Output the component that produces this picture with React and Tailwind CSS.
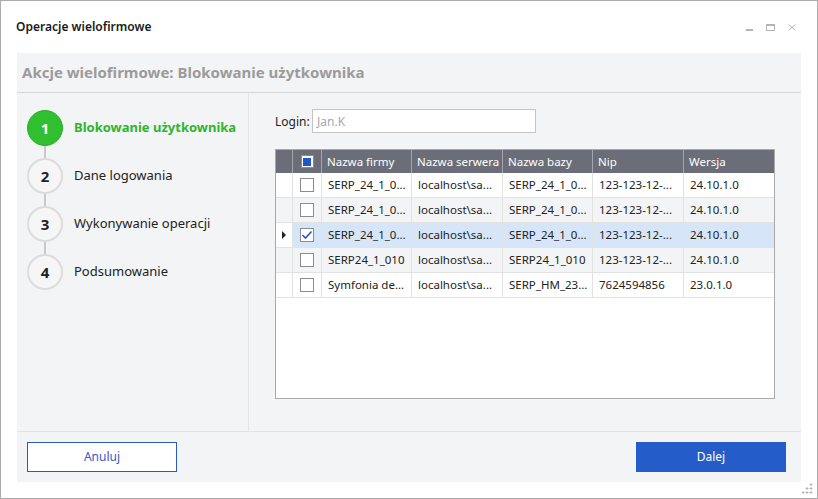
import React from "react";

const steps = [
  { n: 1, label: "Blokowanie użytkownika", active: true },
  { n: 2, label: "Dane logowania" },
  { n: 3, label: "Wykonywanie operacji" },
  { n: 4, label: "Podsumowanie" },
];

const columns = ["Nazwa firmy", "Nazwa serwera", "Nazwa bazy", "Nip", "Wersja"];

const rows = [
  { cells: ["SERP_24_1_0...", "localhost\\sa...", "SERP_24_1_0...", "123-123-12-...", "24.10.1.0"], bg: "bg-white" },
  { cells: ["SERP_24_1_0...", "localhost\\sa...", "SERP_24_1_0...", "123-123-12-...", "24.10.1.0"], bg: "bg-[#f3f4f6]" },
  { cells: ["SERP_24_1_0...", "localhost\\sa...", "SERP_24_1_0...", "123-123-12-...", "24.10.1.0"], bg: "bg-[#d6e6f8]", selected: true },
  { cells: ["SERP24_1_010", "localhost\\sa...", "SERP24_1_010", "123-123-12-...", "24.10.1.0"], bg: "bg-[#f3f4f6]" },
  { cells: ["Symfonia de...", "localhost\\sa...", "SERP_HM_23...", "7624594856", "23.0.1.0"], bg: "bg-white" },
];

const colW = ["w-[90px]", "w-[91px]", "w-[90px]", "w-[91px]", "flex-1"];

const Checkbox = ({ checked }) => (
  <div className="w-[14px] h-[14px] border border-[#8c8c8c] bg-white flex items-center justify-center">
    {checked && (
      <svg width="12" height="10" viewBox="0 0 12 10">
        <path d="M1.5 5 L4.5 8 L10.5 1.5" fill="none" stroke="#2457c7" strokeWidth="1.6" />
      </svg>
    )}
  </div>
);

export default function App() {
  return (
    <div className="w-[818px] h-[499px] border border-[#ababab] bg-white flex flex-col relative font-['Noto_Sans',sans-serif] text-[#222]">
      {/* Title bar */}
      <div className="h-[52px] flex items-center justify-between pl-[15px] pr-[21px]">
        <span className="text-[12px] font-semibold text-[#1a1a1a] -mt-[1px]">Operacje wielofirmowe</span>
        <div className="flex items-center gap-[13px]">
          <div className="w-[7px] h-[2px] bg-[#b4b4b4] mt-[5px]" />
          <div className="w-[9px] h-[7px] border border-[#b4b4b4] border-t-2" />
          <svg width="8" height="7" viewBox="0 0 8 7">
            <path d="M0.5 0.5 L7.5 6.5 M7.5 0.5 L0.5 6.5" stroke="#b4b4b4" strokeWidth="1" />
          </svg>
        </div>
      </div>

      {/* Panel */}
      <div className="flex-1 mx-[16px] mb-[16px] bg-[#f3f4f6] flex flex-col">
        <div className="h-[40px] border-b border-[#d6d6d6] flex items-center pl-[5px]">
          <span className="text-[15px] font-bold text-[#9b9b9b]">Akcje wielofirmowe: Blokowanie użytkownika</span>
        </div>

        <div className="flex-1 flex border-b border-[#e2e3e5]">
          {/* Steps */}
          <div className="w-[232px] border-r border-[#e4e5e7] pt-[17px] pl-[10px]">
            {steps.map((s, i) => (
              <div key={s.n}>
                {i > 0 && <div className="w-[2px] h-[12px] bg-[#c9c9c9] ml-[17px]" />}
                <div className="flex items-center">
                  <div
                    className={
                      s.active
                        ? "w-[36px] h-[36px] rounded-full bg-[#2fbf2f] border border-[#2aad2a] flex items-center justify-center text-white text-[15px] font-bold"
                        : "w-[36px] h-[36px] rounded-full bg-[#f6f6f6] border-2 border-[#dcdcdc] flex items-center justify-center text-[#222] text-[15px] font-bold"
                    }
                  >
                    {s.n}
                  </div>
                  <span
                    className={
                      s.active
                        ? "ml-[11px] text-[13px] font-bold text-[#2db52d] -mt-[1px]"
                        : "ml-[11px] text-[13px] text-[#222] -mt-[1px]"
                    }
                  >
                    {s.label}
                  </span>
                </div>
              </div>
            ))}
          </div>

          {/* Right side */}
          <div className="flex-1 pt-[16px] pl-[26px]">
            <div className="flex items-center">
              <span className="text-[12px] text-[#222] w-[37px] mt-[1px]">Login:</span>
              <div className="w-[224px] h-[24px] border border-[#c4c4c4] bg-white flex items-center pl-[4px]">
                <span className="text-[12px] text-[#a8a8a8] mt-[1px]">Jan.K</span>
              </div>
            </div>

            <div className="mt-[16px] w-[500px] h-[250px] border border-[#a9a9a9] bg-white flex flex-col text-[11.5px]">
              <div className="h-[23px] bg-[#6b6e78] flex text-white">
                <div className="w-[17px] border-r border-[#a4a6ad]" />
                <div className="w-[29px] border-r border-[#a4a6ad] flex items-center justify-center">
                  <div className="w-[13px] h-[13px] bg-white border border-[#8c8c8c] flex items-center justify-center">
                    <div className="w-[8px] h-[8px] bg-[#1f57c8]" />
                  </div>
                </div>
                {columns.map((c, i) => (
                  <div key={c} className={`${colW[i]} ${i < 4 ? "border-r border-[#a4a6ad]" : ""} flex items-center pl-[5px] whitespace-nowrap overflow-hidden`}>
                    {c}
                  </div>
                ))}
              </div>
              {rows.map((r, ri) => (
                <div key={ri} className={`h-[25px] flex border-b border-[#e2e2e2] ${r.bg}`}>
                  <div className={`w-[17px] border-r border-[#e2e2e2] flex items-center justify-center ${r.selected ? "bg-white" : ""}`}>
                    {r.selected && (
                      <svg width="4" height="8" viewBox="0 0 4 8">
                        <path d="M0 0 L4 4 L0 8 Z" fill="#222" />
                      </svg>
                    )}
                  </div>
                  <div className="w-[29px] border-r border-[#e2e2e2] flex items-center justify-center">
                    <Checkbox checked={r.selected} />
                  </div>
                  {r.cells.map((c, i) => (
                    <div key={i} className={`${colW[i]} ${i < 4 ? "border-r border-[#e2e2e2]" : ""} flex items-center pl-[6px] text-[#222] whitespace-nowrap overflow-hidden`}>
                      {c}
                    </div>
                  ))}
                </div>
              ))}
            </div>
          </div>
        </div>

        {/* Footer */}
        <div className="h-[50px] flex items-center justify-between pl-[10px] pr-[15px]">
          <button className="w-[150px] h-[30px] border border-[#2a5cc8] bg-white text-[12px] text-[#3a55c8]">Anuluj</button>
          <button className="w-[150px] h-[30px] bg-[#245dc9] text-[12px] text-white">Dalej</button>
        </div>
      </div>

      {/* resize grip */}
      <svg className="absolute right-[3px] bottom-[3px]" width="12" height="12" viewBox="0 0 12 12">
        {[[9, 1], [9, 5], [5, 5], [9, 9], [5, 9], [1, 9]].map(([x, y], i) => (
          <path key={i} d={`M${x} ${y - 1} V${y + 2} M${x - 1.5} ${y + 0.5} H${x + 1.5}`} stroke="#b8b8b8" strokeWidth="1" />
        ))}
      </svg>
    </div>
  );
}
